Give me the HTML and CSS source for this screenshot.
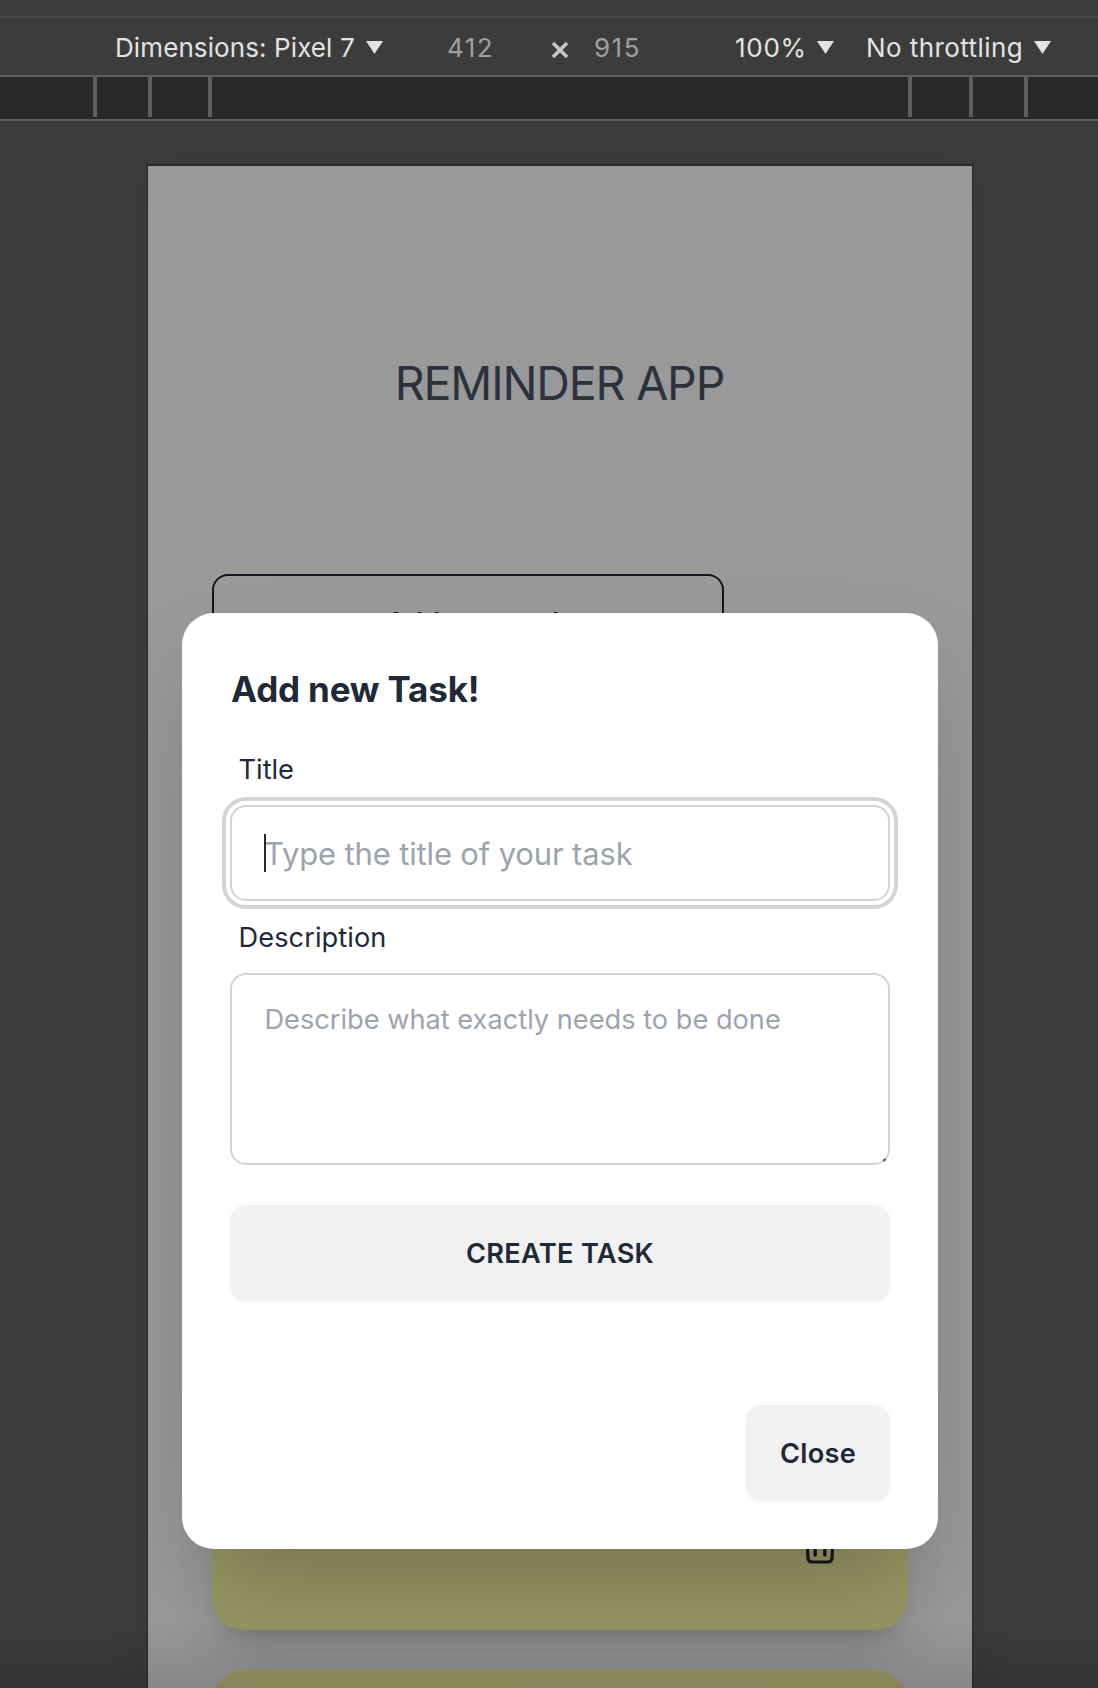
FILE: index.html
```
<!DOCTYPE html>
<html lang="en">
<head>
<meta charset="utf-8">
<title>Reminder App</title>
<link rel="stylesheet" href="styles.css">
</head>
<body>
<div class="devtools">
  <header class="toolbar">
    <div class="menu menu-device"><span>Dimensions: Pixel 7</span><svg class="caret" viewBox="0 0 17 13"><path d="M0 0h17L8.500 13z"/></svg></div>
    <span class="dim dim-width">412</span>
    <svg class="times" viewBox="0 0 18 18"><path d="M2 2l14 14M16 2L2 16"/></svg>
    <span class="dim dim-height">915</span>
    <div class="menu menu-zoom"><span>100%</span><svg class="caret" viewBox="0 0 17 13"><path d="M0 0h17L8.500 13z"/></svg></div>
    <div class="menu menu-throttle"><span>No throttling</span><svg class="caret" viewBox="0 0 17 13"><path d="M0 0h17L8.500 13z"/></svg></div>
  </header>
  <div class="breakpoints">
    <i></i><i></i><i></i><i></i><i></i><i></i>
  </div>
  <main class="stage">
    <div class="viewport">
      <h1 class="app-title">REMINDER APP</h1>
      <div class="page">
        <button class="open-btn">Add new task</button>
        <div class="cards">
          <article class="card">
            <svg class="trash" viewBox="0 0 36 40"><path d="M2 8h32M12 8V4q0-2 2-2h8q2 0 2 2v4M4.500 8L6 34q.3 4 4 4h16q3.700 0 4-4L31.500 8M13.200 16v15.200M22.800 16v15.200"/></svg>
          </article>
          <article class="card"></article>
        </div>
      </div>
      <div class="overlay">
        <form class="modal">
          <h2 class="modal-title">Add new Task!</h2>
          <label class="label" for="title">Title</label>
          <div class="field">
            <input class="input" id="title" placeholder="Type the title of your task">
            <span class="cursor"></span>
          </div>
          <label class="label label-desc" for="desc">Description</label>
          <div class="field">
            <textarea class="textarea" id="desc" placeholder="Describe what exactly needs to be done"></textarea>
            <span class="grip"></span>
          </div>
          <button class="btn btn-create" type="button">CREATE TASK</button>
          <button class="btn btn-close" type="button">Close</button>
        </form>
      </div>
    </div>
  </main>
</div>
</body>
</html>
```
FILE: styles.css
```
* { box-sizing: border-box; }

body {
  margin: 0;
  background: #3c3c3c;
  font-family: Inter, "Liberation Sans", sans-serif;
  color: #1f2937;
}

.devtools {
  position: relative;
  width: 1098px;
  height: 1688px;
  display: flex;
  flex-direction: column;
  overflow: hidden;
}
/* shade along the lower edge of the panel */
.devtools::after {
  content: "";
  position: absolute;
  inset: auto 0 0;
  height: 66px;
  background: linear-gradient(rgba(0,0,0,0), rgba(0,0,0,.12));
}

/* toolbar */
.toolbar {
  height: 77px;
  flex: none;
  display: flex;
  align-items: center;
  padding: 18px 0 0 115px;
  border-bottom: 2px solid #5e5e5e;
  background: linear-gradient(#474747, #474747) 0 16px / 100% 2px no-repeat;
  font-size: 26px;
  line-height: 32px;
  color: #e3e3e3;
}
.toolbar span { padding-top: 2px; }
.menu { display: flex; align-items: center; white-space: nowrap; }
.caret { width: 17px; height: 13px; margin-top: 1px; fill: #e3e3e3; }
.menu-device { width: 332px; gap: 11px; letter-spacing: .1px; }
.dim { color: #a0a0a0; letter-spacing: 1.500px; }
.dim-width { width: 104px; }
.times { width: 18px; height: 18px; margin-top: 6px; fill: none; stroke: #c7c7c7; stroke-width: 3.400; }
.dim.dim-height { width: 166px; padding-left: 25px; }
.menu-zoom { width: 131px; gap: 10px; letter-spacing: .7px; }
.menu-throttle { gap: 11px; letter-spacing: .42px; }

/* media query ruler */
.breakpoints {
  flex: none;
  height: 44px;
  display: flex;
  padding: 0 70px 2px 93px;
  border-bottom: 2px solid #5e5e5e;
  background: #28292a;
}
.breakpoints i { width: 4px; background: #5e5e5e; }
.breakpoints i:nth-child(1) { margin-right: 51px; }
.breakpoints i:nth-child(2) { margin-right: 56px; }
.breakpoints i:nth-child(3) { margin-right: 696px; }
.breakpoints i:nth-child(4) { margin-right: 57px; }
.breakpoints i:nth-child(5) { margin-right: 51px; }

/* emulated device */
.stage {
  flex: 1;
  min-height: 0;
  padding: 45px 0 0 148px;
  overflow: hidden;
}
.viewport {
  position: relative;
  width: 824px;
  height: 1830px;
  overflow: hidden;
  background: #999;
  box-shadow: 0 0 0 1px #2a2a2a, 0 -1px 0 1px #2a2a2a, 0 0 40px rgba(0,0,0,.08);
}
.app-title {
  margin: 0;
  padding-top: 184px;
  height: 408px;
  text-align: center;
  text-indent: -1px;
  font-size: 46.500px;
  line-height: 66px;
  font-weight: 400;
  letter-spacing: -1.170px;
  color: #2c323c;
}
.page { padding: 0 64px; }
.open-btn {
  display: block;
  width: 512px;
  height: 96px;
  padding: 2px 0 0 18px;
  border: 2px solid #12161f;
  border-radius: 16px;
  background: none;
  font: 600 27.200px/28px Inter, "Liberation Sans", sans-serif;
  letter-spacing: .3px;
  color: #12161f;
}
.cards { display: grid; gap: 40px; padding-top: 640px; }
.card {
  height: 320px;
  display: flex;
  justify-content: flex-end;
  align-items: flex-end;
  padding: 0 70px 66px;
  border-radius: 32px;
  background: #999765;
  box-shadow: 0 40px 50px -10px rgba(0,0,0,.1), 0 16px 20px -12px rgba(0,0,0,.12);
}
.trash { width: 36px; height: 40px; fill: none; stroke: #12161f; stroke-width: 3.200; stroke-linecap: round; stroke-linejoin: round; }

/* dialog */
.overlay {
  position: absolute;
  inset: 0;
  display: grid;
  place-items: center;
}
.modal {
  width: 756px;
  height: 936px;
  padding: 48px;
  display: flex;
  flex-direction: column;
  border-radius: 32px;
  background: #fff;
  box-shadow: 0 50px 100px -24px rgba(0,0,0,.25);
}
.modal-title {
  margin: 0;
  height: 84px;
  padding-left: 1px;
  font-size: 35px;
  line-height: 56px;
  font-weight: 700;
  letter-spacing: -.18px;
}
.label {
  height: 60px;
  padding: 1px 0 0 8.500px;
  font-size: 27.200px;
  line-height: 48px;
}
.label-desc { height: 72px; padding-top: 13px; letter-spacing: .08px; }
.field { position: relative; display: flex; }
.input, .textarea {
  width: 100%;
  margin: 0;
  border: 2px solid #d2d4d7;
  border-radius: 16px;
  background: #fff;
  font-family: Inter, "Liberation Sans", sans-serif;
  color: #1f2937;
}
.input {
  height: 96px;
  padding: 0 32px;
  font-size: 31px;
  letter-spacing: -.15px;
  outline: 4px solid #d2d4d7;
  outline-offset: 4px;
}
.textarea {
  height: 192px;
  padding: 25px 32px 23px 32.500px;
  font-size: 27.200px;
  line-height: 40px;
  resize: none;
}
.input::placeholder, .textarea::placeholder { color: #9ca3af; opacity: 1; }
.cursor { position: absolute; left: 34px; top: 29px; width: 2px; height: 38px; background: #1f2937; }
.grip { position: absolute; right: 4px; bottom: 4px; width: 3px; height: 2px; background: #4b4d50; transform: rotate(-45deg); }
.btn {
  height: 96px;
  padding: 2px 0 0;
  border: 0;
  border-radius: 16px;
  background: #f1f1f1;
  box-shadow: 0 2px 4px rgba(0,0,0,.05);
  font: 600 27.200px/28px Inter, "Liberation Sans", sans-serif;
  letter-spacing: .3px;
  color: #1f2937;
}
.btn-create { margin-top: 40px; }
.btn-close { width: 144px; margin: 104px 0 0 auto; }
```
